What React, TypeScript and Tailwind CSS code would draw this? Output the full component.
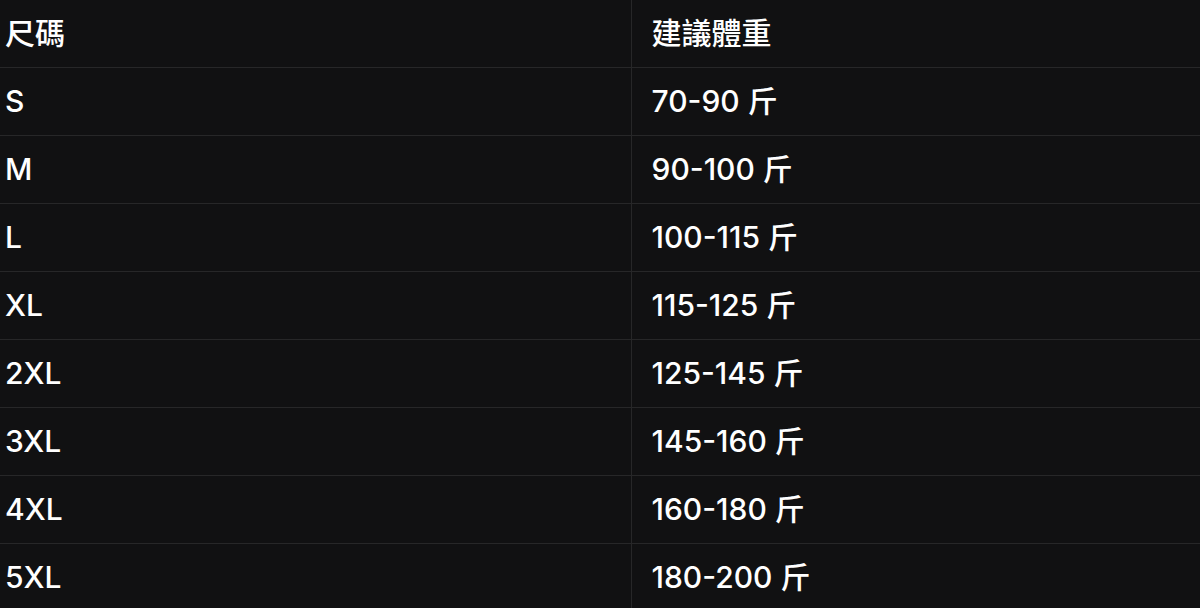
const rows: [string, string][] = [
  ["S", "70-90 斤"],
  ["M", "90-100 斤"],
  ["L", "100-115 斤"],
  ["XL", "115-125 斤"],
  ["2XL", "125-145 斤"],
  ["3XL", "145-160 斤"],
  ["4XL", "160-180 斤"],
  ["5XL", "180-200 斤"],
];

export default function App() {
  return (
    <div
      className="min-h-[608px] w-[1200px] overflow-hidden bg-[#111112] text-white"
      style={{ fontFamily: 'Inter, "Noto Sans CJK TC", sans-serif' }}
    >
      <table className="w-full border-collapse text-[30px] font-medium leading-none">
        <thead>
          <tr className="h-[67px] border-b border-[#272728]">
            <th className="w-[631px] border-r border-[#272728] pl-[5px] text-left font-medium">尺碼</th>
            <th className="pl-[20px] text-left font-medium">建議體重</th>
          </tr>
        </thead>
        <tbody>
          {rows.map(([size, weight]) => (
            <tr key={size} className="h-[68px] border-b border-[#272728]">
              <td className="border-r border-[#272728] pl-[5px]">{size}</td>
              <td className="pl-[20px]">{weight}</td>
            </tr>
          ))}
        </tbody>
      </table>
    </div>
  );
}
